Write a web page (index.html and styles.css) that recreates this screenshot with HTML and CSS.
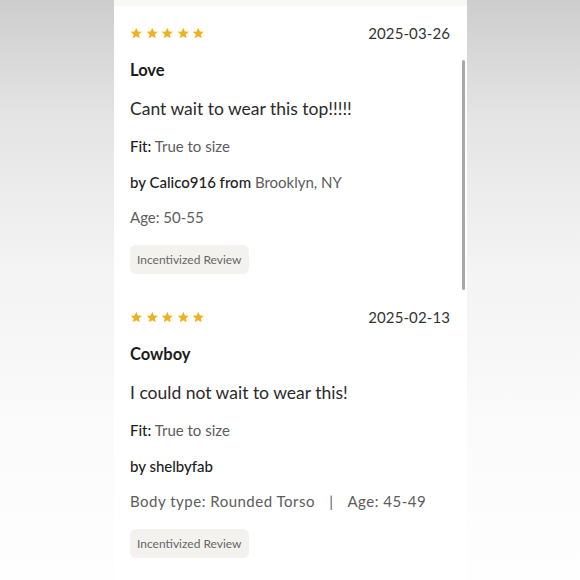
FILE: index.html
```html
<!DOCTYPE html>
<html lang="en">
<head>
    <meta charset="UTF-8">
    <meta name="viewport" content="width=device-width, initial-scale=1.0">
    <title>Reviews</title>
    <link rel="stylesheet" href="styles.css">
</head>
<body>
    <div class="panel">
        <div class="top-strip"></div>

        <div class="review">
            <div class="review-head">
                <div class="stars">
                    <svg viewBox="0 0 24 24"><path d="M12 1.5l3.1 7.1 7.6.6-5.8 5 1.8 7.5L12 17.7l-6.7 4 1.8-7.5-5.8-5 7.6-.6z"/></svg>
                    <svg viewBox="0 0 24 24"><path d="M12 1.5l3.1 7.1 7.6.6-5.8 5 1.8 7.5L12 17.7l-6.7 4 1.8-7.5-5.8-5 7.6-.6z"/></svg>
                    <svg viewBox="0 0 24 24"><path d="M12 1.5l3.1 7.1 7.6.6-5.8 5 1.8 7.5L12 17.7l-6.7 4 1.8-7.5-5.8-5 7.6-.6z"/></svg>
                    <svg viewBox="0 0 24 24"><path d="M12 1.5l3.1 7.1 7.6.6-5.8 5 1.8 7.5L12 17.7l-6.7 4 1.8-7.5-5.8-5 7.6-.6z"/></svg>
                    <svg viewBox="0 0 24 24"><path d="M12 1.5l3.1 7.1 7.6.6-5.8 5 1.8 7.5L12 17.7l-6.7 4 1.8-7.5-5.8-5 7.6-.6z"/></svg>
                </div>
                <span class="date">2025-03-26</span>
            </div>
            <h3 class="title">Love</h3>
            <p class="body">Cant wait to wear this top!!!!!</p>
            <p class="meta"><span class="strong">Fit:</span> True to size</p>
            <p class="meta"><span class="strong">by Calico916 from</span> Brooklyn, NY</p>
            <p class="meta">Age: 50-55</p>
            <span class="badge">Incentivized Review</span>
        </div>

        <div class="review">
            <div class="review-head">
                <div class="stars">
                    <svg viewBox="0 0 24 24"><path d="M12 1.5l3.1 7.1 7.6.6-5.8 5 1.8 7.5L12 17.7l-6.7 4 1.8-7.5-5.8-5 7.6-.6z"/></svg>
                    <svg viewBox="0 0 24 24"><path d="M12 1.5l3.1 7.1 7.6.6-5.8 5 1.8 7.5L12 17.7l-6.7 4 1.8-7.5-5.8-5 7.6-.6z"/></svg>
                    <svg viewBox="0 0 24 24"><path d="M12 1.5l3.1 7.1 7.6.6-5.8 5 1.8 7.5L12 17.7l-6.7 4 1.8-7.5-5.8-5 7.6-.6z"/></svg>
                    <svg viewBox="0 0 24 24"><path d="M12 1.5l3.1 7.1 7.6.6-5.8 5 1.8 7.5L12 17.7l-6.7 4 1.8-7.5-5.8-5 7.6-.6z"/></svg>
                    <svg viewBox="0 0 24 24"><path d="M12 1.5l3.1 7.1 7.6.6-5.8 5 1.8 7.5L12 17.7l-6.7 4 1.8-7.5-5.8-5 7.6-.6z"/></svg>
                </div>
                <span class="date">2025-02-13</span>
            </div>
            <h3 class="title">Cowboy</h3>
            <p class="body">I could not wait to wear this!</p>
            <p class="meta"><span class="strong">Fit:</span> True to size</p>
            <p class="meta"><span class="strong">by shelbyfab</span></p>
            <p class="meta wide">Body type: Rounded Torso <span class="sep">|</span> Age: 45-49</p>
            <span class="badge">Incentivized Review</span>
        </div>

        <div class="scrollbar"></div>
    </div>
</body>
</html>
```

FILE: styles.css
```css
html, body { margin: 0; height: 100%; }
body {
    font-family: Lato, "Open Sans", sans-serif;
    background: linear-gradient(to bottom, #cdcdcd 0%, #e4e4e4 20%, #f3f3f3 45%, #fbfbfb 75%, #fefefe 100%);
    overflow: hidden;
}
.panel { position: relative; width: 353px; margin-left: 114px; height: 580px; background: #fff; }
.top-strip { height: 6px; background: #f9f9f3; }
.review { padding: 17px 17px 16px 16px; }
.review-head { display: flex; justify-content: space-between; align-items: center; height: 20px; }
.stars { display: flex; gap: 3px; margin-top: 1px; }
.stars svg { width: 12.5px; height: 12.5px; fill: #efb21f; }
.date { font-size: 15px; color: #333; letter-spacing: 0.1px; }
.title { margin: 16px 0 0; font-size: 16.5px; line-height: 22px; font-weight: 700; color: #1c1c1c; }
.body { margin: 16px 0 0; font-size: 17.5px; line-height: 24px; color: #2a2a2a; }
.meta { margin: 15px 0 0; font-size: 15px; line-height: 20px; color: #5c5c5c; }
.meta + .meta { margin-top: 16px; }
.meta + .meta + .meta { margin-top: 15px; }
.wide { letter-spacing: 0.5px; }
.strong { color: #1c1c1c; font-weight: 500; }
.sep { margin: 0 10px; }
.badge { display: inline-block; margin-top: 18px; height: 29px; line-height: 29px; padding: 0 7px; border-radius: 6px; background: #f4f2ee; color: #666; font-size: 12px; }
.scrollbar { position: absolute; left: 348px; top: 60px; width: 3px; height: 230px; border-radius: 2px; background: #a8a8a8; }
```
